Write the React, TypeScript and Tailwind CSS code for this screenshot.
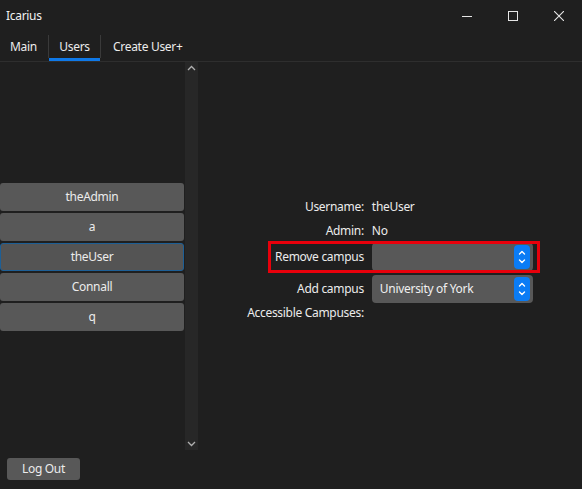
import React from "react";

const users = ["theAdmin", "a", "theUser", "Connall", "q"];

// Blue up/down spinner used by the combo boxes
function Spinner() {
  return (
    <div className="flex h-[24px] w-[16px] items-center justify-center rounded-[4px] bg-[#0a7cf5]">
      <svg width="10" height="18" viewBox="0 0 10 18" fill="none" stroke="#ffffff" strokeWidth="1.4" strokeLinecap="round" strokeLinejoin="round">
        <path d="M2.5 6 L5 3.5 L7.5 6" />
        <path d="M2.5 12 L5 14.5 L7.5 12" />
      </svg>
    </div>
  );
}

function Combo({ value }: { value?: string }) {
  return (
    <div className="flex h-[28px] w-[161px] items-center justify-between rounded-[4px] bg-[#585858] pl-[8px] pr-[3px]">
      <span className="text-[#f0f0f0]">{value ?? ""}</span>
      <Spinner />
    </div>
  );
}

export default function App() {
  return (
    <div
      className="flex h-[489px] w-[582px] flex-col bg-[#1f1f1f] text-[12px] tracking-[-0.3px] text-[#ececec]"
      style={{ fontFamily: '"Segoe UI", "Noto Sans", "Open Sans", sans-serif' }}
    >
      {/* Title bar */}
      <div className="flex h-[32px] items-center justify-between">
        <span className="pl-[6px] text-[#f2f2f2]">Icarius</span>
        <div className="flex h-full">
          <div className="flex w-[46px] items-center justify-center">
            <svg width="10" height="10" viewBox="0 0 10 10"><path d="M0 5.5 H10" stroke="#e6e6e6" strokeWidth="1" /></svg>
          </div>
          <div className="flex w-[46px] items-center justify-center">
            <svg width="10" height="10" viewBox="0 0 10 10"><rect x="0.5" y="0.5" width="9" height="9" fill="none" stroke="#e6e6e6" strokeWidth="1" /></svg>
          </div>
          <div className="flex w-[46px] items-center justify-center">
            <svg width="10" height="10" viewBox="0 0 10 10"><path d="M0 0 L10 10 M10 0 L0 10" stroke="#e6e6e6" strokeWidth="1.1" /></svg>
          </div>
        </div>
      </div>

      {/* Tabs */}
      <div className="flex h-[30px] border-b border-[#2e2e2e]">
        <div className="my-[3px] flex w-[49px] items-center border-r border-[#3a3a3a] pl-[10px]">Main</div>
        <div className="relative my-[3px] flex w-[52px] items-center justify-center border-r border-[#3a3a3a]">
          Users
          <div className="absolute bottom-[-3px] left-0 right-0 h-[3px] bg-[#0f79e8]" />
        </div>
        <div className="my-[3px] flex items-center pl-[12px]">Create User+</div>
      </div>

      {/* Body */}
      <div className="flex flex-1">
        {/* User list */}
        <div className="mr-[1px] flex w-[184px] flex-col justify-center gap-[2px] pb-[4px]">
          {users.map((u) => (
            <div
              key={u}
              className={
                u === "theUser"
                  ? "flex h-[28px] items-center justify-center rounded-[3px] border border-[#1d5f96] bg-[#545454]"
                  : "flex h-[28px] items-center justify-center rounded-[3px] bg-[#585858]"
              }
            >
              {u}
            </div>
          ))}
        </div>

        {/* Scrollbar */}
        <div className="mb-[5px] flex w-[13px] flex-col items-center justify-between bg-[#272727] py-[3px]">
          <svg width="9" height="6" viewBox="0 0 9 6"><path d="M1 5 L4.5 1.5 L8 5" fill="none" stroke="#b0b0b0" strokeWidth="1.3" /></svg>
          <svg width="9" height="6" viewBox="0 0 9 6"><path d="M1 1 L4.5 4.5 L8 1" fill="none" stroke="#b0b0b0" strokeWidth="1.3" /></svg>
        </div>

        {/* Detail form */}
        <div className="flex flex-1 items-center justify-center">
          <div className="grid grid-cols-[auto_auto] items-center gap-x-[8px]">
            <span className="h-[24px] text-right leading-[24px]">Username:</span>
            <span className="h-[24px] leading-[24px]">theUser</span>
            <span className="h-[24px] text-right leading-[24px]">Admin:</span>
            <span className="h-[24px] leading-[24px]">No</span>

            <div className="relative col-span-2 grid grid-cols-subgrid items-center">
              <span className="text-right">Remove campus</span>
              <Combo />
              <div className="pointer-events-none absolute left-[21px] right-[-7px] top-[-2px] bottom-[-2px] border-[3px] border-[#e8000b]" />
            </div>

            <div className="col-span-2 mt-[4px] grid grid-cols-subgrid items-center">
              <span className="text-right">Add campus</span>
              <Combo value="University of York" />
            </div>

            <span className="h-[20px] text-right leading-[20px]">Accessible Campuses:</span>
            <span />
          </div>
        </div>
      </div>

      {/* Footer */}
      <div className="flex h-[34px] items-start pl-[7px] pt-[3px]">
        <div className="flex h-[22px] w-[73px] items-center justify-center rounded-[3px] bg-[#585858]">Log Out</div>
      </div>
    </div>
  );
}
